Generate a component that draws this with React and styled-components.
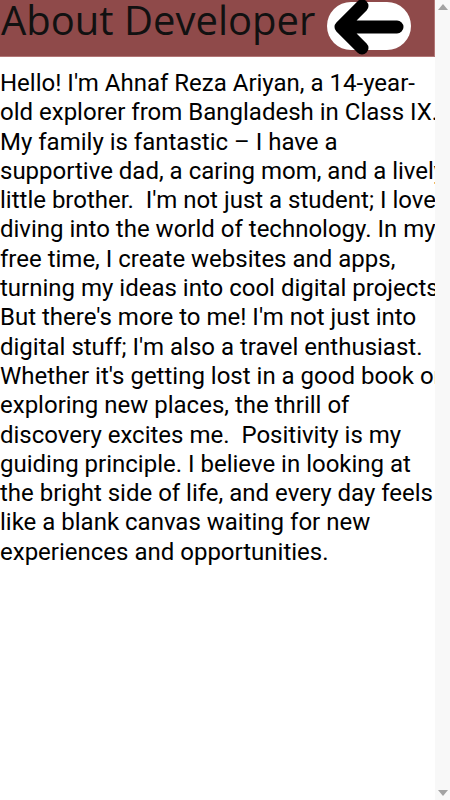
import React from "react";
import styled, { createGlobalStyle } from "styled-components";

const GlobalStyle = createGlobalStyle`
  html, body {
    margin: 0;
    padding: 0;
    overflow: hidden;
    background: #ffffff;
  }
`;

const Window = styled.div`
  display: flex;
  height: 100vh;
`;

const Page = styled.main`
  flex: 1;
  min-width: 0;
  overflow: hidden;
`;

const ScrollTrack = styled.div`
  flex: none;
  width: 15px;
  display: flex;
  flex-direction: column;
  justify-content: space-between;
  align-items: center;
  padding: 3px 0;
  background: #f8f8f8;
  box-sizing: border-box;
`;

const Header = styled.header`
  display: flex;
  align-items: flex-start;
  gap: 12px;
  height: 56px;
  background: #8f4a4a;
  border-bottom: 1px solid #b27676;
  border-right: 1px solid #b27676;
`;

const Title = styled.h1`
  margin: 0;
  padding-left: 1px;
  font-family: "Open Sans", "Noto Sans", sans-serif;
  font-weight: 400;
  font-size: 40px;
  line-height: 39px;
  color: #111111;
  white-space: nowrap;
`;

const BackButton = styled.button`
  flex: none;
  width: 84px;
  height: 48px;
  margin-top: 2px;
  padding: 0;
  border: none;
  border-radius: 24px;
  background: #ffffff;
  display: block;
  cursor: pointer;
  svg {
    display: block;
    overflow: visible;
  }
`;

const Text = styled.p`
  width: 446px;
  margin: 12px 0 0;
  font-family: Roboto, "Noto Sans", sans-serif;
  font-size: 24px;
  line-height: 29.3px;
  color: #000000;
`;

const about =
  "Hello! I'm Ahnaf Reza Ariyan, a 14-year-old explorer from Bangladesh in Class IX. My family is fantastic \u2013 I have a supportive dad, a caring mom, and a lively little brother.\u00a0 I'm not just a student; I love diving into the world of technology. In my free time, I create websites and apps, turning my ideas into cool digital projects. But there's more to me! I'm not just into digital stuff; I'm also a travel enthusiast. Whether it's getting lost in a good book or exploring new places, the thrill of discovery excites me.\u00a0 Positivity is my guiding principle. I believe in looking at the bright side of life, and every day feels like a blank canvas waiting for new experiences and opportunities.";

function BackArrow() {
  return (
    <svg width="84" height="48" viewBox="0 0 84 48" aria-hidden="true">
      <path
        d="M35 4 L14 25 L35 46 M14 25 L70 25"
        fill="none"
        stroke="#000000"
        strokeWidth="13"
        strokeLinecap="round"
        strokeLinejoin="round"
      />
    </svg>
  );
}

function ScrollArrow({ down }) {
  return (
    <svg width="10" height="7" viewBox="0 0 10 7" aria-hidden="true">
      <polygon
        points={down ? "0,0 10,0 5,6" : "0,7 10,7 5,1"}
        fill="#a3a3a3"
      />
    </svg>
  );
}

export default function App() {
  return (
    <Window>
      <GlobalStyle />
      <Page>
        <Header>
          <Title>About Developer</Title>
          <BackButton aria-label="Back">
            <BackArrow />
          </BackButton>
        </Header>
        <Text>{about}</Text>
      </Page>
      <ScrollTrack aria-hidden="true">
        <ScrollArrow />
        <ScrollArrow down />
      </ScrollTrack>
    </Window>
  );
}
